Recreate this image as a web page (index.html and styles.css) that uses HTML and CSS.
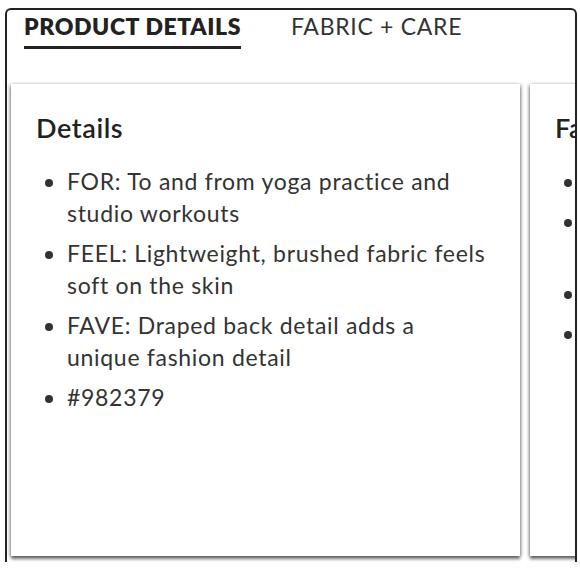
FILE: index.html
```html
<!DOCTYPE html>
<html>
<head>
<meta charset="utf-8">
<link rel="stylesheet" href="styles.css">
</head>
<body>
<div class="frame">
  <div class="tabs">
    <div class="tab active">PRODUCT DETAILS</div>
    <div class="tab">FABRIC + CARE</div>
  </div>
  <div class="cards">
    <div class="card">
      <h2 class="card-title">Details</h2>
      <ul class="list">
        <li>FOR: To and from yoga practice and studio workouts</li>
        <li>FEEL: Lightweight, brushed fabric feels soft on the skin</li>
        <li>FAVE: Draped back detail adds a unique fashion detail</li>
        <li>#982379</li>
      </ul>
    </div>
    <div class="card">
      <h2 class="card-title">Fabric</h2>
      <ul class="list">
        <li>Imported</li>
        <li>Polyester, spandex blend with brushed finish</li>
        <li>Machine wash cold</li>
        <li>Tumble dry low</li>
      </ul>
    </div>
  </div>
</div>
</body>
</html>
```
FILE: styles.css
```css
* { box-sizing: border-box; }
html, body { margin: 0; padding: 0; background: #fff; }
body { font-family: Lato, "Open Sans", sans-serif; color: #333; }

.frame {
  margin: 8px 3px 0 5px;
  height: 554px;
  border: 2px solid #222;
  border-bottom: none;
  border-radius: 6px 6px 0 0;
  overflow: hidden;
  display: flex;
  flex-direction: column;
}

.tabs {
  display: flex;
  gap: 50px;
  padding: 1px 0 0 17px;
  height: 74px;
}
.tab {
  font-size: 23px;
  line-height: 30px;
  color: #333;
  letter-spacing: 0.7px;
  height: 38px;
  white-space: nowrap;
}
.tab.active {
  font-weight: 800;
  color: #222;
  letter-spacing: 0.6px;
  border-bottom: 3px solid #222;
}

.cards {
  display: flex;
  gap: 10px;
  padding: 0 0 6px 4px;
  flex: 1;
  min-height: 0;
}
.card {
  flex: 0 0 509px;
  background: #fff;
  padding: 25px 32px 25px 25px;
  box-shadow: 0 3px 3px rgba(0,0,0,0.55), -2px 0 3px rgba(0,0,0,0.18), 2px 0 3px rgba(0,0,0,0.18);
}
.card-title {
  margin: 0 0 18px;
  font-size: 27px;
  font-weight: 600;
  color: #222;
  letter-spacing: 0.6px;
  line-height: 38px;
  white-space: nowrap;
}
.list {
  margin: 0;
  padding: 0 0 0 31px;
  font-size: 23px;
  letter-spacing: 0.7px;
  line-height: 32px;
  color: #333;
}
.list li { margin-bottom: 8px; }
```
